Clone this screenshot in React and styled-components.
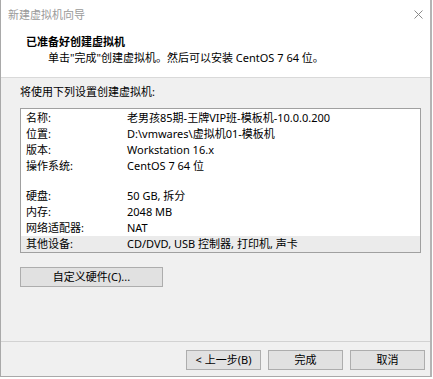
import React from 'react';
import styled, { createGlobalStyle } from 'styled-components';

const GlobalStyle = createGlobalStyle`
  html, body {
    margin: 0;
    padding: 0;
    background: #ffffff;
  }
  body {
    font-family: "Noto Sans", "Noto Sans CJK SC", sans-serif;
    font-size: 11px;
    color: #000;
  }
`;

const Window = styled.div`
  box-sizing: border-box;
  width: 432px;
  height: 377px;
  border: 1px solid #a9a9a9;
  border-top: none;
  border-right: 2px solid #b4b4b4;
  display: flex;
  flex-direction: column;
  background: #f0f0f0;
`;

const TitleBar = styled.div`
  height: 28px;
  background: #fff;
  display: flex;
  align-items: center;
  justify-content: space-between;
  padding: 0 7px 0 7px;
  color: #9a9a9a;
  font-size: 11px;
`;

const CloseIcon = styled.svg`
  width: 9px;
  height: 9px;
`;

const Header = styled.div`
  height: 50px;
  box-sizing: border-box;
  background: #fff;
  border-bottom: 1px solid #d9d9d9;
  padding: 6px 0 0 25px;
`;

const HeaderTitle = styled.div`
  font-weight: bold;
  line-height: 16px;
`;

const HeaderSub = styled.div`
  line-height: 16px;
  padding-left: 22px;
`;

const Body = styled.div`
  flex: 1;
  padding: 6px 9px 0 19px;
`;

const Caption = styled.div`
  line-height: 16px;
  margin-bottom: 8px;
`;

const ListBox = styled.div`
  box-sizing: border-box;
  height: 145px;
  background: #fff;
  border: 1px solid #a0a0a0;
  padding: 1px 0 0 0;
`;

const Row = styled.div`
  display: grid;
  grid-template-columns: 101px 1fr;
  height: 16px;
  line-height: 16px;
  padding-left: 5px;
  margin-top: ${p => (p.gap ? '14px' : '0')};
  background: ${p => (p.selected ? '#ebebeb' : 'transparent')};
  white-space: nowrap;
`;

const Button = styled.button`
  box-sizing: border-box;
  width: ${p => p.w || 75}px;
  height: 20px;
  padding: 0;
  border: 1px solid #adadad;
  background: #e1e1e1;
  font-family: inherit;
  font-size: 11px;
  color: #000;
  line-height: 18px;
`;

const CustomButton = styled(Button)`
  margin-top: 14px;
`;

const Footer = styled.div`
  height: 35px;
  box-sizing: border-box;
  border-top: 1px solid #d2d2d2;
  display: flex;
  justify-content: flex-end;
  gap: 7px;
  padding: 8px 5px 0 0;
`;

const rows = [
  ['名称:', '老男孩85期-王牌VIP班-模板机-10.0.0.200'],
  ['位置:', 'D:\\vmwares\\虚拟机01-模板机'],
  ['版本:', 'Workstation 16.x'],
  ['操作系统:', 'CentOS 7 64 位'],
  ['硬盘:', '50 GB, 拆分', true],
  ['内存:', '2048 MB'],
  ['网络适配器:', 'NAT'],
  ['其他设备:', 'CD/DVD, USB 控制器, 打印机, 声卡', false, true],
];

const App = () => (
  <>
    <GlobalStyle />
    <Window>
      <TitleBar>
        <span>新建虚拟机向导</span>
        <CloseIcon viewBox="0 0 9 9">
          <path d="M0.5 0.5 L8.5 8.5 M8.5 0.5 L0.5 8.5" stroke="#8a8a8a" strokeWidth="1" fill="none" />
        </CloseIcon>
      </TitleBar>
      <Header>
        <HeaderTitle>已准备好创建虚拟机</HeaderTitle>
        <HeaderSub>单击"完成"创建虚拟机。然后可以安装 CentOS 7 64 位。</HeaderSub>
      </Header>
      <Body>
        <Caption>将使用下列设置创建虚拟机:</Caption>
        <ListBox>
          {rows.map(([label, value, gap, selected]) => (
            <Row key={label} gap={gap} selected={selected}>
              <span>{label}</span>
              <span>{value}</span>
            </Row>
          ))}
        </ListBox>
        <CustomButton w={143}>自定义硬件(C)...</CustomButton>
      </Body>
      <Footer>
        <Button>&lt; 上一步(B)</Button>
        <Button>完成</Button>
        <Button>取消</Button>
      </Footer>
    </Window>
  </>
);

export default App;
